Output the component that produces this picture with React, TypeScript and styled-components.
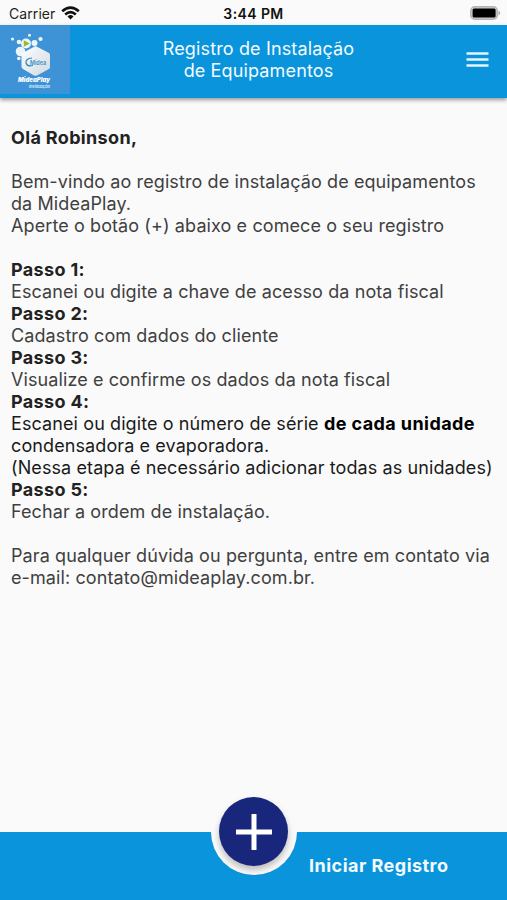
import React from "react";
import styled, { createGlobalStyle } from "styled-components";

const Global = createGlobalStyle`
  * { box-sizing: border-box; }
  html, body { margin: 0; background: #fafafa; font-family: Inter, sans-serif; }
`;
const Screen = styled.div`
  height: 900px; display: flex; flex-direction: column; background: #fafafa; overflow: hidden;
`;
const StatusBar = styled.div`
  height: 25px; flex: none; display: grid; grid-template-columns: 1fr auto 1fr; align-items: center;
  padding: 3px 6px 0 9px; font-size: 14px; line-height: 18px; color: #222;
`;
const Carrier = styled.div`display: flex; align-items: center; gap: 6px; letter-spacing: 0.08px;`;
const Wifi = styled.svg`display: block; margin-top: -3px;`;
const Time = styled.div`font-weight: 600; letter-spacing: 0.4px; margin-left: -3px; color: #111;`;
const Battery = styled.svg`justify-self: end; display: block; margin-top: -3px;`;
const Header = styled.header`
  height: 73px; flex: none; display: grid; grid-template-columns: 70px 1fr 70px; background: #0a94dc;
  box-shadow: 0 2px 4px rgba(0,0,0,.4);
`;
const Logo = styled.svg`display: block; width: 70px; height: 69px;`;
const Title = styled.h1`
  margin: 0; padding-top: 13px; padding-left: 10px; text-align: center; color: #f4fbff; font-weight: 400;
  font-size: 18px; line-height: 22px; letter-spacing: 0.14px;
`;
const Menu = styled.svg`display: block; margin: 26px 0 0 29px;`;
const Content = styled.main`
  flex: 1; padding: 29px 0 0 11px; font-size: 18px; line-height: 22px; white-space: nowrap;
`;
const Line = styled.div<{ $bold?: boolean; $dark?: boolean }>`
  height: 22px;
  font-weight: ${p => (p.$bold ? 700 : 400)};
  letter-spacing: ${p => (p.$bold ? 0.34 : 0.1)}px;
  color: ${p => (p.$bold ? "#222" : p.$dark ? "#1a1a1a" : "#404040")};
  b { letter-spacing: 0.42px; color: #000; }
`;
const lines: { t: React.ReactNode; b?: boolean; d?: boolean }[] = [
  { t: "Olá Robinson,", b: true }, { t: "" },
  { t: "Bem-vindo ao registro de instalação de equipamentos" },
  { t: "da MideaPlay." },
  { t: "Aperte o botão (+) abaixo e comece o seu registro" }, { t: "" },
  { t: "Passo 1:", b: true }, { t: "Escanei ou digite a chave de acesso da nota fiscal" },
  { t: "Passo 2:", b: true }, { t: "Cadastro com dados do cliente" },
  { t: "Passo 3:", b: true }, { t: "Visualize e confirme os dados da nota fiscal" },
  { t: "Passo 4:", b: true }, { t: <>Escanei ou digite o número de série <b>de cada unidade</b></>, d: true },
  { t: "condensadora e evaporadora.", d: true },
  { t: "(Nessa etapa é necessário adicionar todas as unidades)", d: true },
  { t: "Passo 5:", b: true }, { t: "Fechar a ordem de instalação." }, { t: "" },
  { t: "Para qualquer dúvida ou pergunta, entre em contato via" },
  { t: "e-mail: contato@mideaplay.com.br." },
];
const Footer = styled.footer`
  height: 68px; flex: none; display: grid; grid-template-columns: 211px 86px 1fr; background: #0a94dc;
`;
const Notch = styled.div`
  grid-column: 2; width: 86px; height: 86px; margin-top: -43px; border-radius: 50%; background: #fafafa;
  display: grid; place-items: center; padding: 0 1px 1px 0;
`;
const Add = styled.button`
  width: 69px; height: 69px; padding: 0; border: 0; border-radius: 50%; background: #18277c;
  display: grid; place-items: center; box-shadow: 0 4px 6px rgba(0,0,0,.25);
`;
const Label = styled.div`
  padding: 22px 0 0 12px; color: #f4fbff; font-size: 18px; line-height: 24px; font-weight: 700; letter-spacing: 0.48px;
`;

export default function App() {
  return (
    <Screen>
      <Global />
      <StatusBar>
        <Carrier>
          Carrier
          <Wifi width="19" height="14" viewBox="0 0 19 14" fill="none" stroke="#111" strokeWidth="2.7">
            <path d="M1.200 5.200Q9.500 -2 17.800 5.200M4.200 8.500Q9.500 3.900 14.800 8.500" />
            <path d="M6.500 10.400Q9.500 7.800 12.500 10.400L9.500 13.500Z" fill="#111" stroke="none" />
          </Wifi>
        </Carrier>
        <Time>3:44 PM</Time>
        <Battery width="31" height="14">
          <rect x="0.800" y="0.800" width="26.500" height="12.400" rx="4" fill="#ccc" stroke="#b5b5b5" strokeWidth="1.500" />
          <rect x="2.600" y="2.600" width="23" height="8.800" rx="1.500" fill="#000" />
          <path d="M28.500 4.500Q32 7 28.500 9.500Z" fill="#aaa" />
        </Battery>
      </StatusBar>
      <Header>
        <Logo viewBox="0 0 70 69">
          <defs>
            <linearGradient id="hex" x1="0" x2="1" y1="0" y2="1">
              <stop offset="0" stopColor="#fff" /><stop offset="1" stopColor="#cfd8df" />
            </linearGradient>
          </defs>
          <rect width="70" height="69" fill="#3d93d6" />
          <g fill="#edf5fb">
            <circle cx="12.500" cy="14" r="1.600" /><circle cx="29.500" cy="10.300" r="1.500" />
            <circle cx="40.500" cy="14" r="2.100" /><circle cx="19" cy="17" r="2.300" />
            <circle cx="34.500" cy="18" r="3" /><circle cx="20.500" cy="26.500" r="4.800" />
            <circle cx="18.800" cy="33.500" r="1.800" /><circle cx="26" cy="18.500" r="5" />
          </g>
          <path d="M23.800 15.200L29.800 18.500L23.800 21.800Z" fill="#93bd20" />
          <path d="M35.500 21L49 28Q50 28.600 50 30V42Q50 43.500 49 44L37 50.500Q35.500 51.200 34 50.500L23 44Q21.500 43 21.500 41.500V30Q21.500 28.500 23 27.700Z" fill="url(#hex)" />
          <path d="M32 33Q25.500 33.500 26 38Q27 42 33 40.500" fill="none" stroke="#2b8cc4" strokeWidth="1.200" />
          <text x="30" y="39.500" fontSize="5.500" fontWeight="600" fill="#368fc3" textLength="16" lengthAdjust="spacingAndGlyphs">Midea</text>
          <text x="18" y="57" fontSize="6" fontWeight="900" fontStyle="italic" fill="#fff" textLength="32" lengthAdjust="spacingAndGlyphs">MideaPlay</text>
          <text x="29" y="63.200" fontSize="4" fontWeight="700" fontStyle="italic" fill="#d9ebf8" textLength="21" lengthAdjust="spacingAndGlyphs">instalação</text>
        </Logo>
        <Title>Registro de Instalação<br />de Equipamentos</Title>
        <Menu width="24" height="18"><path d="M0.500 2.500h22M0.500 8.500h22M0.500 14.500h22" stroke="#e6f5fd" strokeWidth="2.500" /></Menu>
      </Header>
      <Content>{lines.map((l, i) => <Line key={i} $bold={l.b} $dark={l.d}>{l.t}</Line>)}</Content>
      <Footer>
        <Notch>
          <Add aria-label="Iniciar Registro">
            <svg width="36" height="36"><path d="M0 18h36M18 0v36" stroke="#fff" strokeWidth="5" /></svg>
          </Add>
        </Notch>
        <Label>Iniciar Registro</Label>
      </Footer>
    </Screen>
  );
}
